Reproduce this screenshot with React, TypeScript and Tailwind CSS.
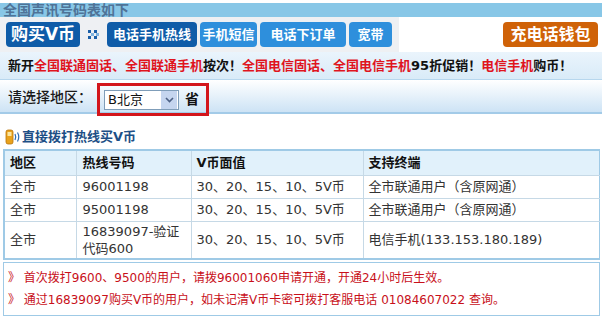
import React from "react";

const cjk = { fontFamily: '"DejaVu Sans", "Noto Sans CJK SC", sans-serif' };

const NavDots = () => (
  <svg width="11" height="9" viewBox="0 0 11 9">
    <rect x="0" y="0" width="3" height="3" fill="#1a5fa8" />
    <rect x="6" y="0" width="3" height="3" fill="#1a5fa8" />
    <rect x="3" y="3" width="3" height="3" fill="#7fb4e0" />
    <rect x="8" y="3" width="3" height="3" fill="#7fb4e0" />
    <rect x="0" y="6" width="3" height="3" fill="#1a5fa8" />
    <rect x="6" y="6" width="3" height="3" fill="#1a5fa8" />
  </svg>
);

const PhoneIcon = () => (
  <svg width="16" height="16" viewBox="0 0 16 16">
    <rect x="1" y="1" width="7" height="14" rx="2" fill="#e9a21c" stroke="#b8740a" strokeWidth="0.8" />
    <rect x="2.5" y="3" width="4" height="4" fill="#fbe6a0" />
    <path d="M10 5 Q11.5 8 10 11" stroke="#2d6db5" strokeWidth="1.2" fill="none" />
    <path d="M12.5 3.5 Q15 8 12.5 12.5" stroke="#2d6db5" strokeWidth="1.2" fill="none" />
  </svg>
);

const rows = [
  { area: "全市", num: "96001198", val: "30、20、15、10、5V币", term: "全市联通用户（含原网通）" },
  { area: "全市", num: "95001198", val: "30、20、15、10、5V币", term: "全市联通用户（含原网通）" },
];

export default function App() {
  return (
    <div className="w-[602px] h-[321px] overflow-hidden bg-white text-[#222]" style={cjk}>
      <div className="mt-[3px] h-[14px] bg-[#88c7e7] flex items-center pl-[3px]">
        <span className="text-[14px] font-bold leading-[14px] text-[#4f7397]">全国声讯号码表如下</span>
      </div>

      {/* nav */}
      <div className="h-[35px] flex items-start">
        <div className="h-[35px] w-[399px] bg-[#eef0f3] flex items-center gap-[3px] pl-[6px]">
          <div className="h-[25px] w-[74px] rounded-[4px] bg-[#0f5ca8] flex items-center justify-center text-white text-[17px] font-bold">
            购买V币
          </div>
          <div className="w-[21px] flex justify-center">
            <NavDots />
          </div>
          <div className="h-[25px] w-[90px] rounded-[4px] bg-[#0f5ca8] flex items-center justify-center text-white text-[13px] font-bold">
            电话手机热线
          </div>
          <div className="h-[25px] w-[57px] rounded-[4px] bg-[#2e8fdc] flex items-center justify-center text-white text-[13px] font-bold">
            手机短信
          </div>
          <div className="h-[25px] w-[86px] rounded-[4px] bg-[#2e8fdc] flex items-center justify-center text-white text-[13px] font-bold">
            电话下订单
          </div>
          <div className="h-[25px] w-[43px] rounded-[4px] bg-[#2e8fdc] flex items-center justify-center text-white text-[13px] font-bold">
            宽带
          </div>
        </div>
        <div className="flex-1 h-[35px] flex items-center justify-end pr-[4px]">
          <div className="h-[25px] w-[95px] rounded-[4px] bg-[#cf6208] flex items-center justify-center text-white text-[16px] font-bold">
            充电话钱包
          </div>
        </div>
      </div>

      {/* notice */}
      <div className="h-[28px] bg-gradient-to-b from-[#eaf4fc] to-[#d9ebf8] border-b border-[#b7d7ee] flex items-center pl-[8px] text-[13px] font-bold text-[#111] whitespace-nowrap">
        新开<span className="text-[#e0141e]">全国联通固话、全国联通手机</span>按次！
        <span className="text-[#e0141e]">全国电信固话、全国电信手机</span>95折促销！
        <span className="text-[#e0141e]">电信手机</span>购币！
      </div>

      {/* region select */}
      <div className="h-[34px] bg-gradient-to-b from-white to-[#cde3f5] border-b-2 border-[#a3cbe8] flex items-start pl-[8px]">
        <span className="mt-[7px] text-[14px] font-medium text-[#1a1a1a] w-[89px]">请选择地区：</span>
        <div className="relative z-10 mt-[3px] h-[33px] w-[112px] border-[3px] border-[#d3151b] flex items-center pl-[4px] gap-[6px]">
          <div className="h-[20px] w-[75px] border border-[#7f9db9] bg-white flex items-center">
            <span className="flex-1 pl-[3px] text-[13px] text-[#111]">B北京</span>
            <div className="h-[18px] w-[16px] bg-[#c5d5ef] flex items-center justify-center mr-[1px]">
              <svg width="9" height="6" viewBox="0 0 9 6">
                <path d="M1 1 L4.5 4.5 L8 1" stroke="#4d6185" strokeWidth="1.6" fill="none" />
              </svg>
            </div>
          </div>
          <span className="text-[14px] font-bold text-[#111]">省</span>
        </div>
      </div>

      {/* heading */}
      <div className="mt-[13px] h-[20px] flex items-center pl-[5px] gap-[1px]">
        <PhoneIcon />
        <span className="text-[13px] font-bold text-[#1d4f86]">直接拨打热线买V币</span>
      </div>

      {/* table */}
      <div className="mt-[2px] ml-[3px] w-[597px]">
        <table className="w-full border-collapse table-fixed border-t-2 border-l-2 border-r border-b-2 border-[#9fcae6] text-[13px]">
          <colgroup>
            <col className="w-[72px]" />
            <col className="w-[115px]" />
            <col className="w-[172px]" />
            <col />
          </colgroup>
          <thead>
            <tr className="h-[25px] bg-[#e1f1fb] font-bold text-[#111] text-left">
              <th className="pl-[5px] border-r border-[#c6d9e6]">地区</th>
              <th className="pl-[6px] border-r border-[#c6d9e6]">热线号码</th>
              <th className="pl-[5px] border-r border-[#c6d9e6]">V币面值</th>
              <th className="pl-[5px]">支持终端</th>
            </tr>
          </thead>
          <tbody className="text-[#333]">
            {rows.map((r, i) => (
              <tr key={i} className="h-[23px] border-t border-[#c6d9e6]">
                <td className="pl-[5px] border-r border-[#c6d9e6]">{r.area}</td>
                <td className="pl-[6px] border-r border-[#c6d9e6]">{r.num}</td>
                <td className="pl-[5px] border-r border-[#c6d9e6]">{r.val}</td>
                <td className="pl-[5px]">{r.term}</td>
              </tr>
            ))}
            <tr className="h-[38px] border-t border-[#c6d9e6]">
              <td className="pl-[5px] border-r border-[#c6d9e6]">全市</td>
              <td className="pl-[6px] border-r border-[#c6d9e6] leading-[17px]">
                16839097-验证
                <br />
                代码600
              </td>
              <td className="pl-[5px] border-r border-[#c6d9e6]">30、20、15、10、5V币</td>
              <td className="pl-[5px]">电信手机(133.153.180.189)</td>
            </tr>
          </tbody>
        </table>
      </div>

      {/* notes */}
      <div className="mt-[2px] ml-[3px] w-[597px] h-[54px] border border-[#9fcae6] flex flex-col justify-center pl-[4px] gap-[4px] text-[12px] text-[#c8101a]">
        <div>》 首次拨打9600、9500的用户，请拨96001060申请开通，开通24小时后生效。</div>
        <div>》 通过16839097购买V币的用户，如未记清V币卡密可拨打客服电话 01084607022 查询。</div>
      </div>
    </div>
  );
}
